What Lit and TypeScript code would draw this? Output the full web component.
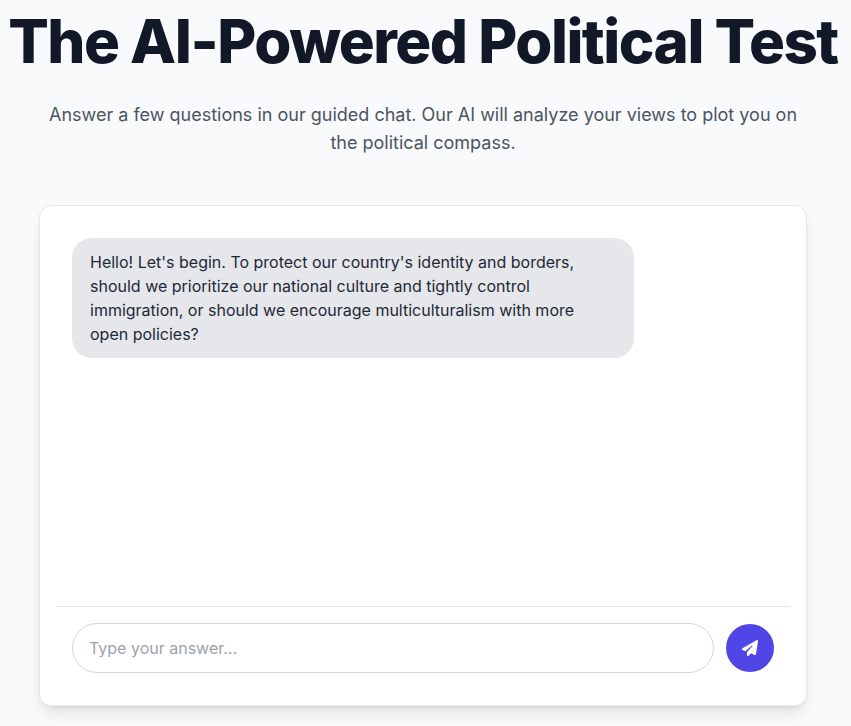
import { LitElement, html, css } from "lit";
import { customElement } from "lit/decorators.js";

@customElement("app-root")
export class AppRoot extends LitElement {
  static styles = css`
    :host { display: block; height: 726px; overflow: hidden; background: #f9fafb; font-family: Inter, sans-serif; color: #111827; }
    .wrap { width: 846px; display: flex; flex-direction: column; align-items: center; margin-top: -9px; }
    h1 { margin: 0 -40px; text-align: center; font-size: 60px; line-height: 60px; font-weight: 800; letter-spacing: -1.5px; padding-top: 20px; white-space: nowrap; color: #111827; }
    .sub { margin: 30px 0 0; width: 768px; text-align: center; font-size: 18px; line-height: 28px; color: #4b5563; }
    .card { margin: 48px 0 0; width: 768px; height: 501px; box-sizing: border-box; background: #fff; border: 1px solid #e5e7eb; border-radius: 12px; box-shadow: 0 10px 15px -3px rgba(0,0,0,.1), 0 4px 6px -4px rgba(0,0,0,.1); display: flex; flex-direction: column; padding: 0 16px 16px; }
    .log { flex: 1; padding: 32px 16px; }
    .bubble { width: 562px; box-sizing: border-box; padding: 12px 18px; background: #e5e7eb; border-radius: 20px; font-size: 16px; line-height: 24px; color: #1f2937; }
    .bar { border-top: 1px solid #e5e7eb; display: flex; align-items: center; gap: 12px; padding: 16px; }
    .input { flex: 1; height: 50px; box-sizing: border-box; border: 1px solid #d1d5db; border-radius: 25px; padding: 0 16px; display: flex; align-items: center; font-size: 16px; color: #9ca3af; }
    .send { width: 48px; height: 48px; flex: none; border-radius: 50%; background: #4f46e5; border: 0; display: flex; align-items: center; justify-content: center; padding: 0; }
    svg { width: 16px; height: 16px; fill: #fff; }
  `;
  render() {
    return html`<div class="wrap">
      <h1>The AI-Powered Political Test</h1>
      <p class="sub">Answer a few questions in our guided chat. Our AI will analyze your views to plot you on the political compass.</p>
      <div class="card">
        <div class="log"><div class="bubble">Hello! Let's begin. To protect our country's identity and borders, should we prioritize our national culture and tightly control immigration, or should we encourage multiculturalism with more open policies?</div></div>
        <div class="bar">
          <div class="input">Type your answer...</div>
          <button class="send" aria-label="Send"><svg viewBox="0 0 512 512"><path d="M498.1 5.6c10.100 7 15.400 19.100 13.500 31.200l-64 416c-1.500 9.700-7.400 18.200-16 23s-18.900 5.400-28 1.600L284 427.700l-68.500 74.100c-8.900 9.700-22.900 12.900-35.200 8.100S160 493.200 160 480V396.400c0-4 1.500-7.800 4.200-10.700L331.800 202.800c5.800-6.300 5.600-16-.4-22s-15.700-6.400-22-.7L106 360.800 17.700 316.600C7.100 311.300 .3 300.700 0 288.900s5.900-22.800 16.100-28.700l448-256c10.700-6.100 23.900-5.500 34 1.400z"/></svg></button>
        </div>
      </div>
    </div>`;
  }
}
